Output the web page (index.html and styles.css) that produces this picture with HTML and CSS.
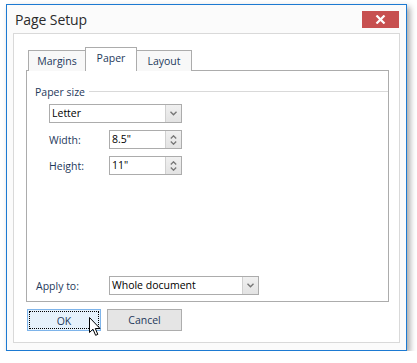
FILE: index.html
```html
<!DOCTYPE html>
<html lang="en">
<head>
    <meta charset="UTF-8">
    <title>Page Setup</title>
    <link rel="stylesheet" href="styles.css">
</head>
<body>

    <div class="window">
        <div class="titlebar">
            <span class="title">Page Setup</span>
            <button class="close-btn" title="Close">
                <svg width="11" height="9" viewBox="0 0 11 9"><path d="M1.5 0.5 L9.5 8.5 M9.5 0.5 L1.5 8.5" stroke="#fff" stroke-width="2.2"/></svg>
            </button>
        </div>

        <div class="panel">
            <div class="tabs">
                <div class="tab">Margins</div>
                <div class="tab active">Paper</div>
                <div class="tab">Layout</div>
            </div>

            <div class="tab-page">
                <div class="group-title"><span>Paper size</span></div>

                <div class="combo combo-letter">
                    <span class="combo-text">Letter</span>
                    <span class="combo-btn">
                        <svg width="7" height="5" viewBox="0 0 7 5"><path d="M0.5 0.8 L3.5 3.8 L6.5 0.8" fill="none" stroke="#777" stroke-width="1.4"/></svg>
                    </span>
                </div>

                <div class="row">
                    <label>Width:</label>
                    <div class="spin">
                        <span class="combo-text">8.5"</span>
                        <span class="spin-btns">
                            <svg width="7" height="4" viewBox="0 0 7 4"><path d="M0.8 3.5 L3.5 0.8 L6.2 3.5" fill="none" stroke="#777" stroke-width="1.3"/></svg>
                            <svg width="7" height="4" viewBox="0 0 7 4"><path d="M0.8 0.5 L3.5 3.2 L6.2 0.5" fill="none" stroke="#777" stroke-width="1.3"/></svg>
                        </span>
                    </div>
                </div>

                <div class="row">
                    <label>Height:</label>
                    <div class="spin">
                        <span class="combo-text">11"</span>
                        <span class="spin-btns">
                            <svg width="7" height="4" viewBox="0 0 7 4"><path d="M0.8 3.5 L3.5 0.8 L6.2 3.5" fill="none" stroke="#777" stroke-width="1.3"/></svg>
                            <svg width="7" height="4" viewBox="0 0 7 4"><path d="M0.8 0.5 L3.5 3.2 L6.2 0.5" fill="none" stroke="#777" stroke-width="1.3"/></svg>
                        </span>
                    </div>
                </div>

                <div class="row apply-row">
                    <label>Apply to:</label>
                    <div class="combo combo-apply">
                        <span class="combo-text">Whole document</span>
                        <span class="combo-btn">
                            <svg width="7" height="5" viewBox="0 0 7 5"><path d="M0.5 0.8 L3.5 3.8 L6.5 0.8" fill="none" stroke="#777" stroke-width="1.4"/></svg>
                        </span>
                    </div>
                </div>
            </div>

            <div class="buttons">
                <button class="btn btn-ok"><span class="focus">OK</span></button>
                <button class="btn">Cancel</button>
                <svg class="cursor" width="12" height="20" viewBox="0 0 12 20">
                    <path d="M0.5 0.5 L0.5 15.5 L4 12.2 L6.6 18.3 L8.8 17.4 L6.3 11.5 L11 11.5 Z" fill="#fff" stroke="#000" stroke-width="1" stroke-linejoin="miter"/>
                </svg>
            </div>
        </div>
    </div>

</body>
</html>
```

FILE: styles.css
```css
body {
    margin: 0;
    background: #fff;
    font-family: "Open Sans", "Liberation Sans", sans-serif;
    font-size: 10.5px;
    color: #1e395b;
}

.window {
    width: 399px;
    height: 345px;
    margin: 4px 0 0 6px;
    border: 1px solid #1d7ad2;
    background: #fbfbfb;
    box-shadow: 3px 3px 6px rgba(0, 0, 0, 0.35);
    display: flex;
    flex-direction: column;
}

.titlebar {
    height: 28px;
    display: flex;
    align-items: flex-start;
    justify-content: space-between;
    padding: 0 7px 0 8px;
}

.title {
    font-size: 14px;
    color: #2b2b2b;
    margin-top: 5px;
    letter-spacing: -0.1px;
}

.close-btn {
    width: 37px;
    height: 17px;
    margin-top: 6px;
    border: none;
    padding: 0;
    background: #c75050;
    display: flex;
    align-items: center;
    justify-content: center;
}

.panel {
    flex: 1;
    margin: 0 6px 7px 6px;
    border: 1px solid #d9d9d9;
    background: #fff;
    padding: 13px 10px 0 12px;
    display: flex;
    flex-direction: column;
    position: relative;
}

.tabs {
    display: flex;
    padding-left: 2px;
    align-items: flex-end;
    height: 24px;
    margin-bottom: -1px;
}

.tab {
    height: 21px;
    box-sizing: border-box;
    border: 1px solid #acacac;
    border-bottom: none;
    background: #f8f8f8;
    padding: 0;
    text-align: center;
    line-height: 21px;
    margin-right: -1px;
    position: relative;
    z-index: 1;
}

.tab:nth-child(1) { width: 58px; }
.tab:nth-child(3) { width: 56px; }

.tab.active {
    height: 24px;
    width: 52px;
    background: #fff;
    line-height: 20px;
    z-index: 2;
}

.tab-page {
    height: 230px;
    border: 1px solid #acacac;
    display: flex;
    flex-direction: column;
    padding: 0 0 0 8px;
}

.group-title {
    display: flex;
    align-items: center;
    margin-top: 13px;
    height: 15px;
}

.group-title::after {
    content: "";
    flex: 1;
    height: 1px;
    background: #d9d9d9;
    margin-left: 4px;
}

.combo, .spin {
    height: 19px;
    box-sizing: border-box;
    border: 1px solid #acacac;
    background: #fff;
    display: flex;
    align-items: stretch;
}

.combo-text {
    flex: 1;
    color: #000;
    padding-left: 2px;
    line-height: 17px;
}

.combo-btn, .spin-btns {
    width: 15px;
    border-left: 1px solid #d0d0d0;
    background: linear-gradient(#f0f0f0, #e3e3e3);
    display: flex;
    flex-direction: column;
    align-items: center;
    justify-content: center;
    gap: 2px;
}

.combo-letter {
    width: 133px;
    margin: 5px 0 0 14px;
}

.row {
    display: flex;
    align-items: center;
    margin: 7px 0 0 14px;
}

.row label {
    width: 60px;
}

.spin {
    width: 73px;
}

.apply-row {
    margin: auto 0 6px 1px;
}

.apply-row label {
    width: 73px;
}

.combo-apply {
    width: 150px;
}

.buttons {
    display: flex;
    gap: 6px;
    margin-top: 7px;
    position: relative;
}

.btn {
    width: 75px;
    height: 22px;
    border: 1px solid #adadad;
    background: #e5e5e5;
    font-family: inherit;
    font-size: 10.5px;
    color: #1e395b;
    padding: 0;
}

.btn-ok {
    width: 74px;
    margin-left: 1px;
    border-color: #7eb4ea;
    background: #e5f1fb;
    padding: 1px;
}

.focus {
    display: block;
    height: 100%;
    box-sizing: border-box;
    border: 1px dotted #000;
    line-height: 18px;
}

.cursor {
    position: absolute;
    left: 63px;
    top: 8px;
}
```
